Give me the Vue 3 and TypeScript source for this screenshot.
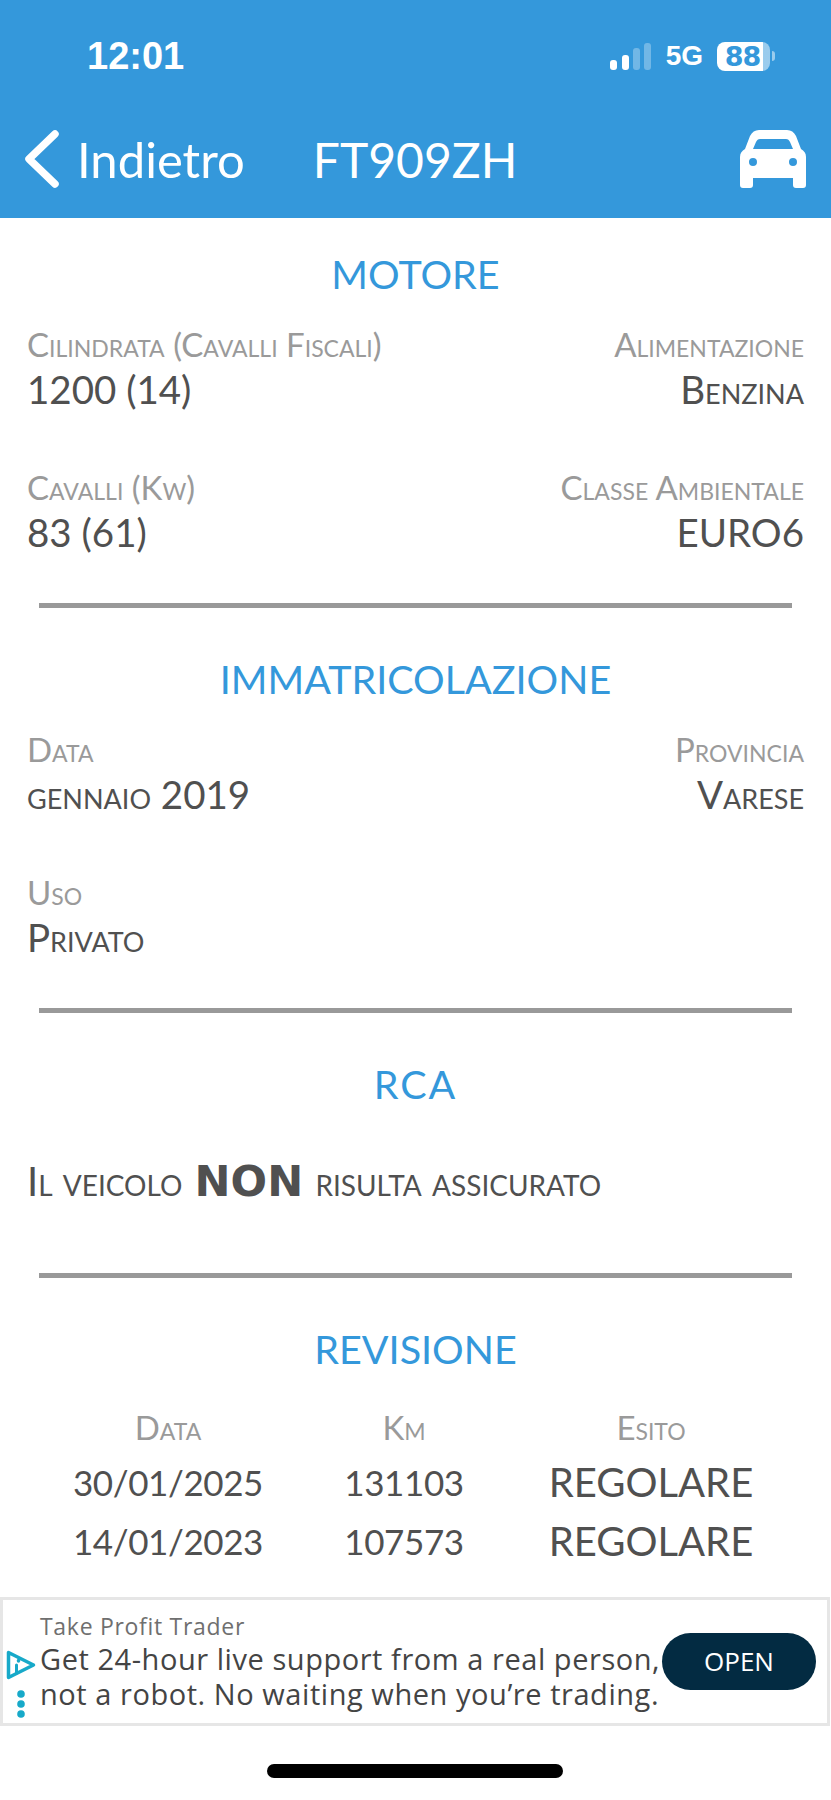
<script setup lang="ts">
interface Field {
  label: string
  value: string
  right?: boolean
  caps?: boolean
}

const motore: Field[] = [
  { label: 'Cilindrata (Cavalli Fiscali)', value: '1200 (14)' },
  { label: 'Alimentazione', value: 'Benzina', right: true, caps: true },
  { label: 'Cavalli (Kw)', value: '83 (61)' },
  { label: 'Classe Ambientale', value: 'EURO6', right: true, caps: true },
]

const immatricolazione: Field[] = [
  { label: 'Data', value: 'gennaio 2019', caps: true },
  { label: 'Provincia', value: 'Varese', right: true, caps: true },
  { label: 'Uso', value: 'Privato', caps: true },
]

const revisioni = [
  { data: '30/01/2025', km: '131103', esito: 'REGOLARE' },
  { data: '14/01/2023', km: '107573', esito: 'REGOLARE' },
]
</script>

<template>
  <div class="page">
    <header class="top">
      <div class="status">
        <span class="time">12:01</span>
        <div class="status-right">
          <svg class="signal" width="41" height="27" viewBox="0 0 41 27" fill="#fff">
            <rect x="0" y="17" width="7" height="10" rx="3" />
            <rect x="12" y="12" width="7" height="15" rx="3" />
            <rect x="23" y="5" width="7" height="22" rx="3" opacity=".3" />
            <rect x="34" y="0" width="7" height="27" rx="3" opacity=".3" />
          </svg>
          <span class="net">5G</span>
          <span class="battery"><span>88</span></span>
          <span class="battery-tip"></span>
        </div>
      </div>
      <nav class="nav">
        <svg class="chevron" width="36" height="58" viewBox="0 0 36 58" fill="none" stroke="#fff" stroke-width="7.5" stroke-linecap="round" stroke-linejoin="round">
          <path d="M31 4 5 29l26 25" />
        </svg>
        <span class="back">Indietro</span>
        <span class="plate">FT909ZH</span>
        <svg class="car" width="66" height="58" viewBox="0 0 66 58" fill="#fff">
          <path fill-rule="evenodd" d="M19 0h28c4 0 7 2 9 6l5 13c3 2 5 4 5 8v28c0 2-1 3-3 3h-7c-2 0-3-1-3-3v-7H13v7c0 2-1 3-3 3H3c-2 0-3-1-3-3V27c0-4 2-6 5-8l5-13c2-4 5-6 9-6Zm1 9c-2 0-3 1-4 3l-3 7h40l-3-7c-1-2-2-3-4-3H20Zm-7 19a4 4 0 1 0 0 8 4 4 0 0 0 0-8Zm40 0a4 4 0 1 0 0 8 4 4 0 0 0 0-8Z" />
        </svg>
      </nav>
    </header>

    <main>
      <section class="block first">
        <h2>MOTORE</h2>
        <div class="fields">
          <div v-for="f in motore" :key="f.label" class="field" :class="{ right: f.right }">
            <div class="label">{{ f.label }}</div>
            <div class="value" :class="{ caps: f.caps }">{{ f.value }}</div>
          </div>
        </div>
      </section>
      <hr class="rule" />

      <section class="block">
        <h2>IMMATRICOLAZIONE</h2>
        <div class="fields">
          <div v-for="f in immatricolazione" :key="f.label" class="field" :class="{ right: f.right }">
            <div class="label">{{ f.label }}</div>
            <div class="value" :class="{ caps: f.caps }">{{ f.value }}</div>
          </div>
        </div>
      </section>
      <hr class="rule" />

      <section class="block">
        <h2 class="short">RCA</h2>
        <p class="rca">Il veicolo <strong>NON</strong> risulta assicurato</p>
      </section>
      <hr class="rule rule-rca" />

      <section class="block">
        <h2>REVISIONE</h2>
        <div class="rev-grid">
          <div class="label">Data</div>
          <div class="label">Km</div>
          <div class="label">Esito</div>
          <template v-for="r in revisioni" :key="r.data">
            <div class="value num">{{ r.data }}</div>
            <div class="value num">{{ r.km }}</div>
            <div class="value esito">{{ r.esito }}</div>
          </template>
        </div>
      </section>
    </main>

    <aside class="ad">
      <div class="ad-icons">
        <svg width="30" height="30" viewBox="0 0 30 30" fill="none" stroke="#17a9c9" stroke-width="3.5" stroke-linecap="round">
          <path d="M2.5 2.5v25l25-12.5Z" stroke-linejoin="round" />
          <path d="M10.5 15v8" stroke-width="3" />
          <path d="M12.5 10.5v.5" stroke-width="3.5" />
        </svg>
        <svg width="10" height="28" viewBox="0 0 10 28" fill="#17a9c9">
          <circle cx="5" cy="4" r="3.8" />
          <circle cx="5" cy="14" r="3.8" />
          <circle cx="5" cy="24" r="3.8" />
        </svg>
      </div>
      <div class="ad-text">
        <div class="ad-brand">Take Profit Trader</div>
        <div class="ad-copy">Get 24-hour live support from a real person,<br />not a robot. No waiting when you’re trading.</div>
      </div>
      <div class="ad-open">OPEN</div>
    </aside>

    <div class="home"></div>
  </div>
</template>

<style>
html,
body {
  margin: 0;
  background: #fff;
}
</style>

<style scoped>
.page {
  display: flow-root;
  width: 831px;
  height: 1800px;
  overflow: hidden;
  background: #fff;
  font-family: Lato, "Open Sans", sans-serif;
  color: #505050;
}

.top {
  height: 218px;
  background: #3498db;
  color: #fff;
  box-sizing: border-box;
  padding-top: 36px;
}

.status {
  display: flex;
  justify-content: space-between;
  align-items: center;
  height: 40px;
  padding: 0 56px 0 87px;
}

.time {
  font: 700 38px "Liberation Sans", sans-serif;
}

.status-right {
  display: flex;
  align-items: center;
}

.signal {
  margin-right: 15px;
}

.net {
  font: 700 28px "Liberation Sans", sans-serif;
  margin-right: 14px;
}

.battery {
  display: block;
  width: 53px;
  height: 29px;
  border-radius: 8px;
  background: linear-gradient(90deg, #fff 86%, rgb(255 255 255 / 50%) 86%);
  color: #3498db;
  font: 700 27px/29px "DejaVu Sans", sans-serif;
  text-align: center;
}

.battery span {
  display: block;
  letter-spacing: -1px;
  padding-right: 2px;
}

.battery-tip {
  width: 3px;
  height: 10px;
  border-radius: 0 3px 3px 0;
  background: rgb(255 255 255 / 50%);
  margin-left: 2px;
}

.nav {
  display: flex;
  align-items: center;
  height: 60px;
  margin-top: 53px;
  padding: 0 25px 0 24px;
}

.back {
  margin-left: 17px;
  font-size: 49px;
}

.plate {
  margin-left: 68px;
  font-size: 48px;
}

.car {
  margin-left: auto;
}

.block {
  padding: 41px 27px 0;
}

.block.first {
  padding-top: 26px;
}

.block h2 {
  margin: 0;
  font-size: 39.5px;
  line-height: 60px;
  font-weight: 400;
  color: #3498db;
  text-align: center;
}

.block h2.short {
  letter-spacing: 2px;
}

.fields {
  display: grid;
  grid-template-columns: 1fr 1fr;
  row-gap: 53px;
  margin-top: 18px;
}

.field.right {
  text-align: right;
}

.label {
  font-size: 33px;
  line-height: 45px;
  color: #9a9a9a;
  font-variant: small-caps;
  white-space: nowrap;
}

.value {
  font-size: 38.5px;
  line-height: 45px;
  white-space: nowrap;
}

.value.caps {
  font-variant: small-caps;
}

.rule {
  height: 5px;
  margin: 48px 39px 0;
  border: 0;
  background: #999;
}

.rca {
  margin: 42px 0 0;
  font-size: 40px;
  line-height: 50px;
  font-variant: small-caps;
}

.rca strong {
  margin: 0 2px;
  font: 700 43px "DejaVu Sans", sans-serif;
  font-variant: normal;
}

.rule-rca {
  margin-top: 67px;
}

.rev-grid {
  display: grid;
  grid-template-columns: 236px 236px 258px;
  margin: 22px 0 0 23px;
  text-align: center;
}

.rev-grid .label {
  line-height: 52px;
}

.rev-grid .value {
  line-height: 59px;
}

.rev-grid .num {
  font-size: 35px;
  letter-spacing: -0.4px;
}

.rev-grid .esito {
  font-size: 40px;
}

.ad {
  display: flex;
  position: relative;
  box-sizing: border-box;
  width: 830px;
  height: 129px;
  margin-top: 26px;
  padding-left: 37px;
  border: 3px solid #e6e6e6;
  font-family: "Open Sans", sans-serif;
}

.ad-icons {
  position: absolute;
  top: 50px;
  left: 3px;
  display: flex;
  flex-direction: column;
  align-items: center;
  gap: 10px;
  width: 30px;
}

.ad-text {
  padding-top: 12px;
  white-space: nowrap;
}

.ad-brand {
  font-size: 23px;
  line-height: 29px;
  color: #6f6f6f;
  letter-spacing: 0.7px;
}

.ad-copy {
  font-size: 29px;
  line-height: 35px;
  color: #444;
  letter-spacing: 0.55px;
}

.ad-open {
  position: absolute;
  top: 33px;
  right: 11px;
  width: 154px;
  height: 57px;
  border-radius: 29px;
  background: #032b42;
  color: #fff;
  font-size: 26px;
  line-height: 57px;
  text-align: center;
}

.home {
  width: 296px;
  height: 14px;
  margin: 38px 0 0 267px;
  border-radius: 7px;
  background: #000;
}
</style>
